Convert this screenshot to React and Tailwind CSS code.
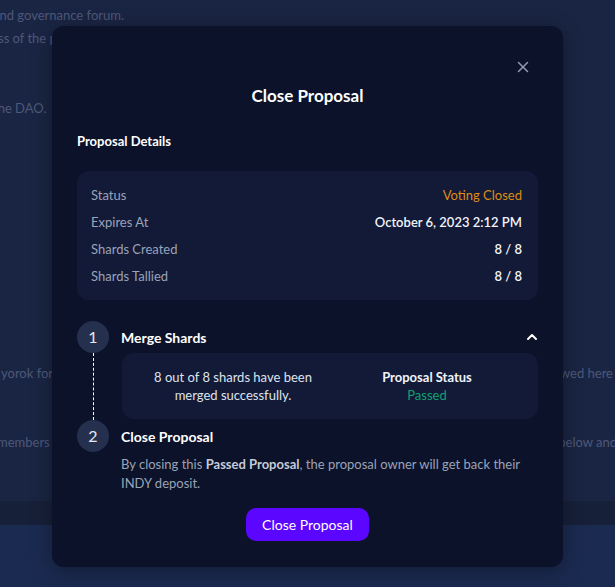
import { X, ChevronUp } from "lucide-react";

const font = { fontFamily: '"Lato", "Noto Sans", sans-serif' };

function DetailRow({ label, value, valueClass }) {
  return (
    <div className="flex justify-between items-center leading-[20px]">
      <span className="text-[#9aa3b8]">{label}</span>
      <span className={valueClass}>{value}</span>
    </div>
  );
}

function Background() {
  return (
    <div className="absolute inset-0 flex flex-col text-[13px] text-[#4d5879] whitespace-nowrap overflow-hidden">
      <div className="bg-[#1a2543] h-[501px] flex flex-col">
        <p className="-ml-[7px] mt-[5px] leading-[20px]">and governance forum.</p>
        <p className="-ml-[2px] mt-[3px] leading-[20px]">ss of the proposal will be published on chain.</p>
        <p className="-ml-[7px] mt-[50px] leading-[20px]">the DAO.</p>
        <div className="mt-[245px] flex justify-between leading-[20px]">
          <span className="ml-[1px]">yorok for the proposal</span>
          <span className="mr-[2px]">allowed here</span>
        </div>
        <div className="mt-[49px] flex justify-between leading-[20px]">
          <span className="-ml-[3px]">members of the</span>
          <span className="-mr-[2px]">below and</span>
        </div>
      </div>
      <div className="bg-[#172039] h-[24px]" />
      <div className="bg-[#1b2a50] flex-1" />
    </div>
  );
}

export default function App() {
  return (
    <div className="relative w-[615px] h-[587px] overflow-hidden" style={font}>
      <Background />

      <div className="absolute left-[52px] top-[26px] w-[511px] rounded-[12px] bg-[#0b1229] shadow-[0_4px_20px_rgba(0,0,0,0.35)] px-[25px] pt-[58px] pb-[26px] text-white">
        <button className="absolute right-[31px] top-[32px] text-[#8f9bb5]">
          <X size={18} strokeWidth={2} />
        </button>

        <h2 className="text-center text-[17px] font-bold leading-[24px]">Close Proposal</h2>

        <h3 className="mt-[23px] text-[13px] font-bold leading-[20px]">Proposal Details</h3>

        <div className="mt-[20px] rounded-[12px] bg-[#121a38] pl-[14px] pr-[16px] py-[14px] flex flex-col gap-[7px] text-[13px]">
          <DetailRow label="Status" value="Voting Closed" valueClass="text-[#dd8c14]" />
          <DetailRow label="Expires At" value="October 6, 2023 2:12 PM" valueClass="font-semibold text-[#f1f3f8]" />
          <DetailRow label="Shards Created" value="8 / 8" valueClass="font-semibold text-[#f1f3f8]" />
          <DetailRow label="Shards Tallied" value="8 / 8" valueClass="font-semibold text-[#f1f3f8]" />
        </div>

        <div className="mt-[21px] flex">
          <div className="w-8 flex flex-col items-center">
            <div className="w-8 h-8 rounded-full bg-[#25304f] flex items-center justify-center text-[16px] text-[#e5e8f0]">1</div>
            <div className="flex-1 border-l border-dashed border-white" />
          </div>
          <div className="flex-1 ml-3">
            <div className="h-8 flex items-center justify-between">
              <span className="text-[14px] font-bold">Merge Shards</span>
              <ChevronUp size={16} strokeWidth={3} className="mr-[-2px]" />
            </div>
            <div className="ml-[1px] mb-[1px] rounded-[12px] bg-[#121a38] px-[14px] py-[15px] grid grid-cols-2 text-[13px] leading-[18px] text-center">
              <p className="text-[#dfe3ec]">8 out of 8 shards have been<br />merged successfully.</p>
              <div>
                <p className="font-bold text-[#f1f3f8]">Proposal Status</p>
                <p className="text-[#12a070]">Passed</p>
              </div>
            </div>
          </div>
        </div>

        <div className="flex">
          <div className="w-8">
            <div className="w-8 h-8 rounded-full bg-[#25304f] flex items-center justify-center text-[16px] text-[#e5e8f0]">2</div>
          </div>
          <div className="flex-1 ml-3">
            <div className="h-8 flex items-center">
              <span className="text-[14px] font-bold">Close Proposal</span>
            </div>
            <p className="mt-[3px] text-[13px] leading-[19px] text-[#9aa3b8]">
              By closing this <span className="font-bold text-[#c5cbd8]">Passed Proposal</span>, the proposal owner will get back their INDY deposit.
            </p>
          </div>
        </div>

        <div className="mt-[15px] flex justify-center">
          <button className="h-[33px] px-[16px] rounded-[10px] bg-[#5a06ff] text-[14px] text-white">Close Proposal</button>
        </div>
      </div>
    </div>
  );
}
